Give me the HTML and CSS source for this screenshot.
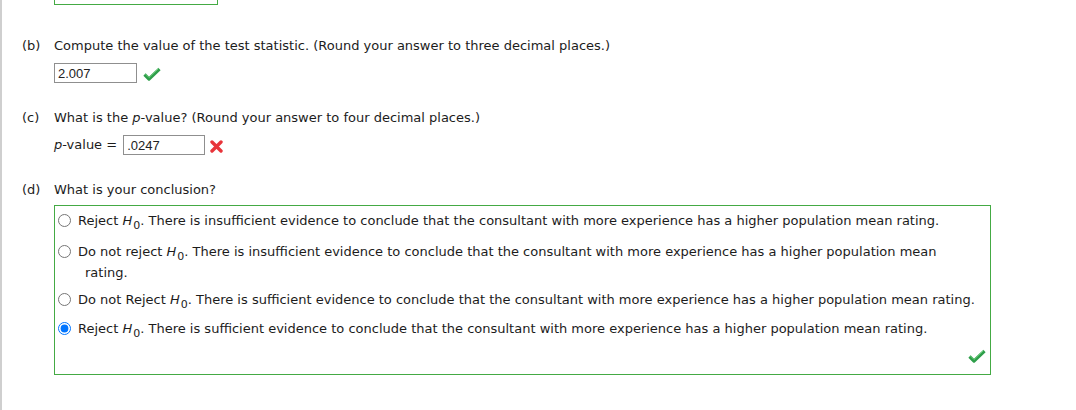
FILE: index.html
```html
<!DOCTYPE html>
<html lang="en">
<head>
    <meta charset="UTF-8">
    <title>Hypothesis Test</title>
    <link rel="stylesheet" href="styles.css">
</head>
<body>
<div class="page">
    <div class="prev-box"></div>

    <div class="part part-b">
        <span class="part-label">(b)</span>
        <div class="part-body">
            <p class="question">Compute the value of the test statistic. (Round your answer to three decimal places.)</p>
            <div class="answer-row">
                <input class="field field-b" type="text" value="2.007" readonly>
                <svg class="mark-ok" width="18" height="14" viewBox="0 0 18 14">
                    <path d="M1.5 7.5 L6 12 L16.5 2" fill="none" stroke="#2e9e4a" stroke-width="3.2" stroke-linejoin="round"/>
                    <path d="M2.5 7 L6 10.5 L15.5 1.5" fill="none" stroke="#6fd07e" stroke-width="1"/>
                </svg>
            </div>
        </div>
    </div>

    <div class="part part-c">
        <span class="part-label">(c)</span>
        <div class="part-body">
            <p class="question">What is the <i>p</i>-value? (Round your answer to four decimal places.)</p>
            <div class="answer-row">
                <span class="field-label"><i>p</i>-value =</span>
                <input class="field field-c" type="text" value=".0247" readonly>
                <svg class="mark-bad" width="13" height="13" viewBox="0 0 13 13">
                    <path d="M2 2 L11 11 M11 2 L2 11" stroke="#e8343a" stroke-width="3.4" stroke-linecap="round"/>
                </svg>
            </div>
        </div>
    </div>

    <div class="part part-d">
        <span class="part-label">(d)</span>
        <div class="part-body">
            <p class="question">What is your conclusion?</p>
            <div class="choices">
                <label class="choice choice-first">
                    <input type="radio" name="concl">Reject <i>H</i><sub>0</sub>. There is insufficient evidence to conclude that the consultant with more experience has a higher population mean rating.
                </label>
                <label class="choice choice-wrap">
                    <input type="radio" name="concl">Do not reject <i>H</i><sub>0</sub>. There is insufficient evidence to conclude that the consultant with more experience has a higher population mean <span>rating.</span>
                </label>
                <label class="choice">
                    <input type="radio" name="concl">Do not Reject <i>H</i><sub>0</sub>. There is sufficient evidence to conclude that the consultant with more experience has a higher population mean rating.
                </label>
                <label class="choice">
                    <input type="radio" name="concl" checked>Reject <i>H</i><sub>0</sub>. There is sufficient evidence to conclude that the consultant with more experience has a higher population mean rating.
                </label>
                <div class="choices-foot">
                    <svg class="mark-ok" width="18" height="14" viewBox="0 0 18 14">
                        <path d="M1.5 7.5 L6 12 L16.5 2" fill="none" stroke="#2e9e4a" stroke-width="3.2" stroke-linejoin="round"/>
                        <path d="M2.5 7 L6 10.5 L15.5 1.5" fill="none" stroke="#6fd07e" stroke-width="1"/>
                    </svg>
                </div>
            </div>
        </div>
    </div>
</div>
</body>
</html>
```

FILE: styles.css
```css
* {
    margin: 0;
    padding: 0;
    box-sizing: border-box;
}

body {
    font-family: 'DejaVu Sans', Verdana, sans-serif;
    font-size: 13px;
    color: #1c1c1c;
    background: #ffffff;
}

.page {
    border-left: 2px solid #cfcfcf;
    padding-left: 20px;
    min-height: 410px;
}

/* 上一题答案框（被截断） */
.prev-box {
    width: 164px;
    height: 5px;
    margin-left: 32px;
    border: 1px solid #44aa44;
    border-top: none;
}

.part {
    display: grid;
    grid-template-columns: 32px 1fr;
    line-height: 20px;
}

.part-b {
    margin-top: 31px;
}

.part-c, .part-d {
    margin-top: 25px;
}

.answer-row {
    display: flex;
    align-items: center;
    margin-top: 7px;
    height: 20px;
}

.field {
    height: 20px;
    border: 1px solid #8f8f8f;
    padding: 0 3px;
    font-family: 'Liberation Sans', Arial, sans-serif;
    font-size: 13px;
    color: #222222;
    outline: none;
}

.field-b {
    width: 83px;
}

.field-c {
    width: 82px;
}

.field-label {
    margin-right: 6px;
}

.mark-ok {
    margin-left: 6px;
    margin-top: 2px;
}

.mark-bad {
    margin-left: 5px;
    margin-top: 2px;
}

/* 选项框 */
.choices {
    margin-top: 5px;
    width: 937px;
    border: 1px solid #44aa44;
    padding: 4px 10px 11px 30px;
}

.choice {
    display: block;
    line-height: 21px;
    text-indent: -27px;
    margin-bottom: 8px;
}

.choice-first {
    margin-bottom: 10px;
}

.choice-wrap {
    margin-bottom: 6px;
}

.choice input {
    width: 13px;
    height: 13px;
    margin: 0 7px 0 0;
    vertical-align: -2px;
}

sub {
    font-size: 11px;
    line-height: 0;
    vertical-align: -4px;
    margin-left: 1px;
}

.choices-foot {
    display: flex;
    justify-content: flex-end;
    margin-right: -6px;
    height: 16px;
}
```
